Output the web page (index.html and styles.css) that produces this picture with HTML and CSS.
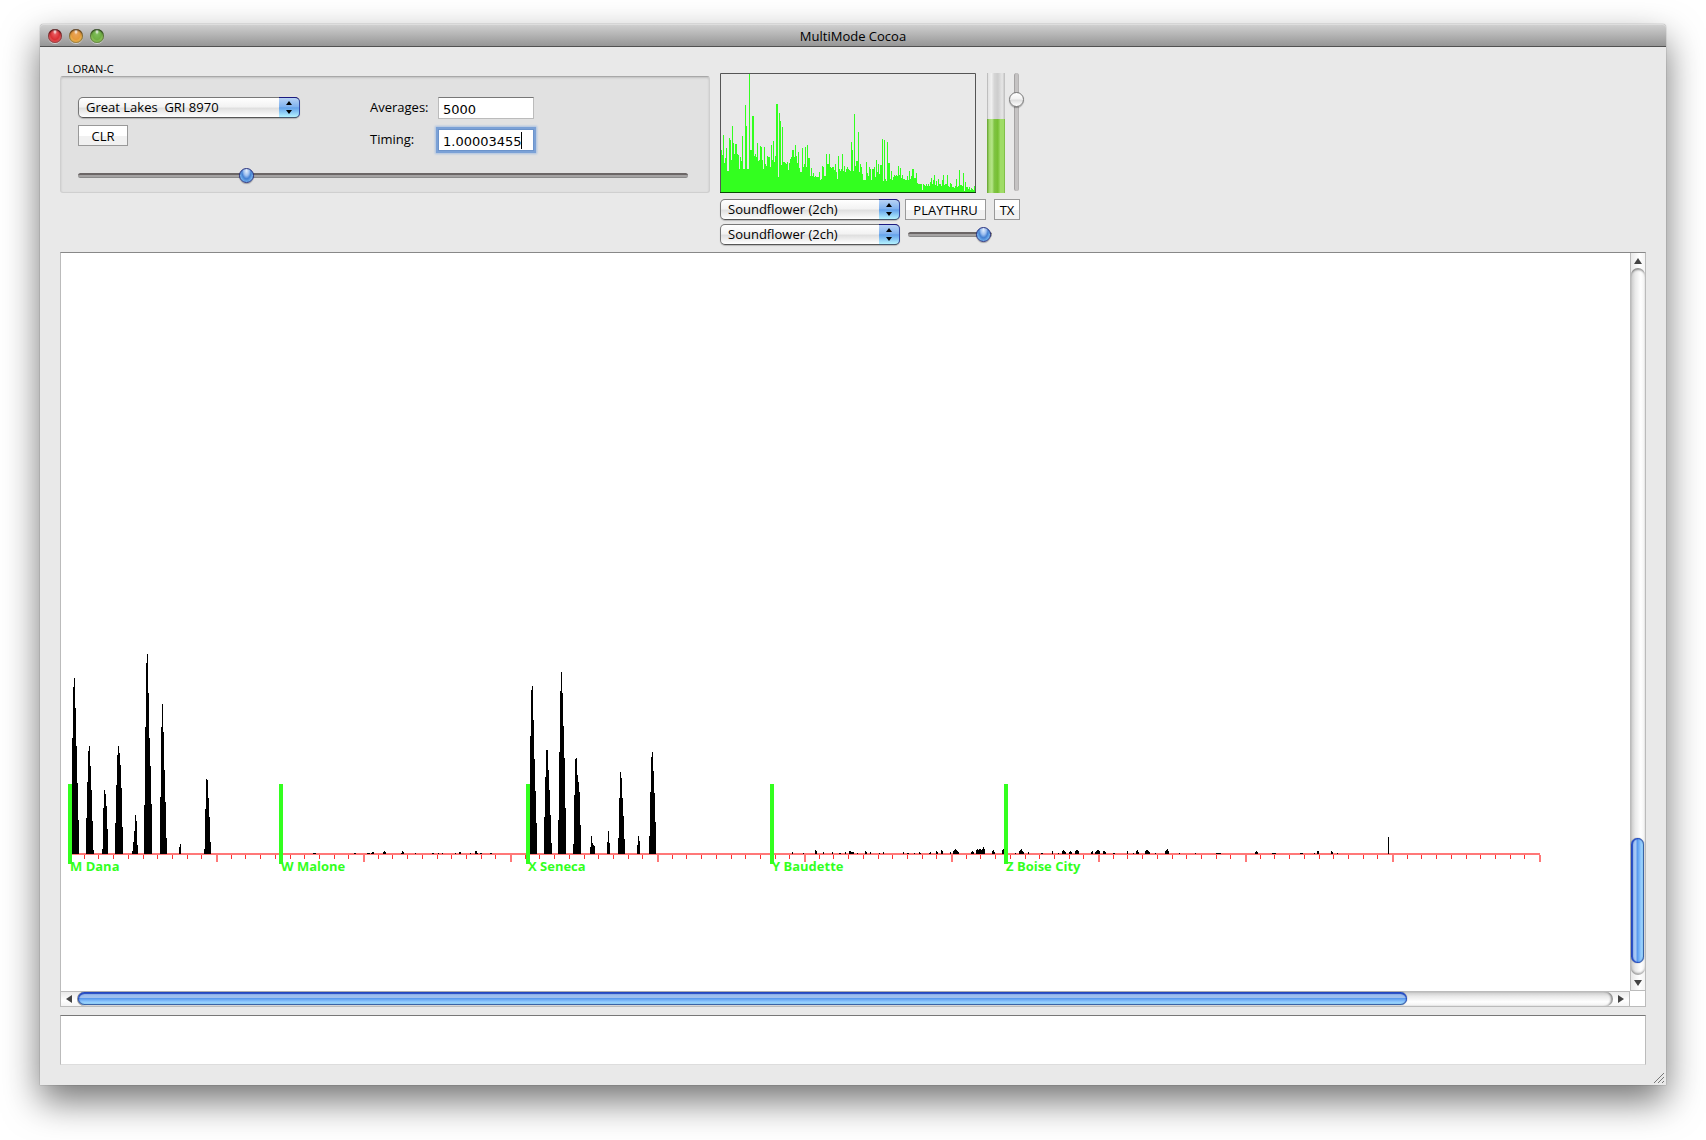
FILE: index.html
```html
<!DOCTYPE html>
<html lang="en">

<head>
    <meta charset="UTF-8">
    <meta name="viewport" content="width=device-width, initial-scale=1.0">
    <title>MultiMode Cocoa</title>
    <link rel="stylesheet" href="styles.css">
</head>

<body>
    <div class="window">
        <header class="titlebar">
            <div class="lights">
                <button class="light red" aria-label="Close"></button>
                <button class="light yellow" aria-label="Minimize"></button>
                <button class="light green" aria-label="Zoom"></button>
            </div>
            <h1>MultiMode Cocoa</h1>
        </header>

        <main class="content">
            <div class="controls">
                <fieldset class="loran">
                    <legend>LORAN-C</legend>
                    <div class="box">
                        <div class="settings">
                            <div class="chain">
                                <div class="popup">
                                    <select id="gri" aria-label="Chain">
                                        <option>Great Lakes&nbsp; GRI 8970</option>
                                    </select>
                                    <span class="cap"><svg width="6" height="13" viewBox="0 0 6 13"><path d="M3 0L6 4H0zM3 13L0 9H6z"/></svg></span>
                                </div>
                                <button class="square clr">CLR</button>
                            </div>
                            <form class="numbers">
                                <label for="averages">Averages:</label>
                                <input id="averages" type="text" value="5000" autocomplete="off">
                                <label for="timing">Timing:</label>
                                <div class="field">
                                    <input id="timing" type="text" value="1.00003455" autocomplete="off">
                                    <span class="caret"></span>
                                </div>
                            </form>
                        </div>
                        <input class="slider" type="range" value="27" aria-label="Offset">
                    </div>
                </fieldset>

                <div class="audio">
                    <div class="levels">
                        <svg class="spectrum" width="256" height="120" viewBox="0 0 256 120">
                            <path id="spectrum" fill="#33ff1f"/>
                            <path d="M.5 120V.5H255.5V120" fill="none" stroke="#555"/>
                            <path d="M0 119.5H256" stroke="#084a04"/>
                        </svg>
                        <div class="meter" role="meter" aria-label="Level" aria-valuenow="62">
                            <div class="fill" style="height: 62%"></div>
                        </div>
                        <input class="slider vertical" type="range" value="82" aria-label="Gain">
                    </div>
                    <div class="device">
                        <div class="popup">
                            <select aria-label="Input device">
                                <option>Soundflower (2ch)</option>
                            </select>
                            <span class="cap"><svg width="6" height="13" viewBox="0 0 6 13"><path d="M3 0L6 4H0zM3 13L0 9H6z"/></svg></span>
                        </div>
                        <button class="square playthru">PLAYTHRU</button>
                        <button class="square tx">TX</button>
                    </div>
                    <div class="device">
                        <div class="popup">
                            <select aria-label="Output device">
                                <option>Soundflower (2ch)</option>
                            </select>
                            <span class="cap"><svg width="6" height="13" viewBox="0 0 6 13"><path d="M3 0L6 4H0zM3 13L0 9H6z"/></svg></span>
                        </div>
                        <input class="slider volume" type="range" value="99" aria-label="Volume">
                    </div>
                </div>
            </div>

            <section class="scroll-view">
                <div class="plot">
                    <svg width="1569" height="738" shape-rendering="crispEdges">
                        <g id="ticks"></g>
                        <path d="M9 600H1479V602H9z" fill="#ff7878"/>
                        <path id="pulses"/>
                        <g id="stations"></g>
                    </svg>
                </div>
                <div class="vbar">
                    <button class="arrow" aria-label="Up"><svg width="8" height="6"><path d="M4 0L8 6H0z"/></svg></button>
                    <div class="track">
                        <div class="knob"></div>
                    </div>
                    <button class="arrow" aria-label="Down"><svg width="8" height="6"><path d="M0 0H8L4 6z"/></svg></button>
                </div>
                <div class="hbar">
                    <button class="arrow" aria-label="Left"><svg width="6" height="8"><path d="M6 0V8L0 4z"/></svg></button>
                    <div class="track">
                        <div class="knob" style="width: 86.6%"></div>
                    </div>
                    <button class="arrow" aria-label="Right"><svg width="6" height="8"><path d="M0 0L6 4L0 8z"/></svg></button>
                </div>
            </section>

            <textarea class="log" aria-label="Log"></textarea>
        </main>

        <svg class="grip" width="12" height="12" viewBox="0 0 12 12"><path d="M1 11L11 1M5 11L11 5M9 11L11 9" stroke="#777" fill="none"/></svg>
    </div>

    <script src="script.js"></script>
</body>

</html>
```
FILE: styles.css
```css
* {
    margin: 0;
    padding: 0;
    box-sizing: border-box;
}

body {
    display: flex;
    min-height: 100vh;
    padding: 24px 40px 55px 40px;
    background: #fff;
    font-family: "Lucida Grande", "Open Sans", "Noto Sans", sans-serif;
    font-size: 13px;
    color: #000;
}

button,
input,
select,
textarea {
    font: inherit;
    color: inherit;
    border: none;
    border-radius: 0;
    outline: none;
}

.window {
    position: relative;
    display: flex;
    flex-direction: column;
    flex: 1;
    min-width: 0;
    background: #e9e9e9;
    border-radius: 4px 4px 0 0;
    box-shadow: 0 0 1px rgba(0, 0, 0, 0.7), 0 16px 36px rgba(0, 0, 0, 0.55);
}

/* title bar */
.titlebar {
    display: flex;
    align-items: center;
    height: 23px;
    padding: 0 8px;
    background: linear-gradient(#cfcfcf, #969696);
    border-top: 1px solid #dedede;
    border-bottom: 1px solid #515151;
    border-radius: 4px 4px 0 0;
}

.titlebar h1 {
    flex: 1;
    text-align: center;
    font-size: 13px;
    font-weight: normal;
    line-height: 20px;
    padding-right: 64px;
}

.lights {
    display: flex;
    gap: 7px;
    width: 64px;
}

.light {
    width: 14px;
    height: 14px;
    border-radius: 50%;
    box-shadow: inset 0 1px 2px rgba(0, 0, 0, 0.6), inset 0 0 1px 1px rgba(0, 0, 0, 0.3), 0 1px 0 rgba(255, 255, 255, 0.5);
}

.light.red {
    background: radial-gradient(ellipse at 50% 18%, #fff 0, #e8555a 20%, #d92f34 50%, #ff9f9f 95%);
}

.light.yellow {
    background: radial-gradient(ellipse at 50% 18%, #fff 0, #e8a355 20%, #e59a3a 50%, #fff080 95%);
}

.light.green {
    background: radial-gradient(ellipse at 50% 18%, #fff 0, #7dbb58 20%, #6fae43 50%, #d2f58e 95%);
}

.content {
    display: flex;
    flex-direction: column;
    flex: 1;
    padding: 15px 20px 20px;
}

/* controls */
.controls {
    display: flex;
    gap: 10px;
    margin-bottom: 7px;
}

.loran {
    width: 650px;
    border: none;
}

.loran legend {
    padding-left: 7px;
    font-size: 11px;
    line-height: 14px;
}

.box {
    height: 117px;
    padding: 20px 21px 0 17px;
    background: #e1e1e1;
    border: 1px solid #cfcfcf;
    border-top-color: #a8a8a8;
    border-radius: 3px;
    box-shadow: inset 0 1px 2px rgba(0, 0, 0, 0.15);
}

.settings {
    display: flex;
    gap: 70px;
    height: 71px;
}

.chain {
    width: 222px;
}

.popup {
    position: relative;
    height: 21px;
}

.popup select {
    appearance: none;
    width: 100%;
    height: 21px;
    padding: 0 24px 2px 7px;
    border: 1px solid #777;
    border-bottom-color: #555;
    border-radius: 5px;
    background: linear-gradient(#fff 0, #f3f3f3 45%, #e0e0e0 55%, #fff 100%);
    box-shadow: 0 1px 1px rgba(0, 0, 0, 0.2);
}

.popup .cap {
    position: absolute;
    top: 0;
    right: 0;
    display: flex;
    align-items: center;
    justify-content: center;
    width: 21px;
    height: 21px;
    border: 1px solid #34499f;
    border-top-color: #1c1a80;
    border-left: none;
    border-bottom-color: #46566e;
    border-radius: 0 5px 5px 0;
    background: linear-gradient(#b8d3f5 0, #82b3ef 45%, #64a2ea 52%, #b5f3ff 100%);
    pointer-events: none;
}

.square {
    height: 21px;
    padding-top: 1px;
    border: 1px solid #999;
    background: linear-gradient(#fff 0, #fff 50%, #f1f1f1 51%, #f1f1f1 100%);
    line-height: 18px;
    text-align: center;
}

.clr {
    width: 50px;
    margin-top: 7px;
}

.numbers {
    display: grid;
    grid-template-columns: 68px 96px;
    align-content: start;
    row-gap: 10px;
}

.numbers label {
    line-height: 20px;
}

.numbers input {
    display: block;
    width: 96px;
    height: 22px;
    padding: 2px 4px 0;
    border: 1px solid #bbb;
    border-top-color: #777;
    background: #fff;
    font-family: "Lucida Grande", "DejaVu Sans", sans-serif;
    caret-color: transparent;
}

.numbers input:focus {
    border-color: #6b93cb;
    box-shadow: 0 0 0 2px #7ba1d6, 0 0 2px 3px #a9c0e0;
}

.field {
    position: relative;
}

/* steady caret, shown only while the field has focus */
.field .caret {
    position: absolute;
    top: 3px;
    left: 83px;
    display: none;
    width: 1px;
    height: 17px;
    background: #000;
}

.field input:focus + .caret {
    display: block;
}

/* sliders */
.slider {
    appearance: none;
    display: block;
    width: 100%;
    height: 15px;
    background: none;
}

.slider::-webkit-slider-runnable-track {
    height: 5px;
    border-top: 2px solid #6b6666;
    border-bottom: 1px solid #8a8a8a;
    border-radius: 3px;
    background: #a5a3a3;
}

.slider::-webkit-slider-thumb {
    appearance: none;
    width: 15px;
    height: 15px;
    margin-top: -7px;
    border: 1px solid #26307f;
    border-radius: 50%;
    background: radial-gradient(ellipse at 50% 15%, #e4effc 0, #9dbfef 30%, #4580d2 50%, #7fc0f5 80%, #c8f6ff 100%);
    box-shadow: 0 1px 1px rgba(0, 0, 0, 0.3);
}

.slider.vertical {
    writing-mode: vertical-lr;
    direction: rtl;
    width: 15px;
    height: 118px;
    margin-left: 4px;
}

.slider.vertical::-webkit-slider-runnable-track {
    width: 5px;
    height: 100%;
    border: none;
    border-left: 1px solid #a5a3a3;
    border-right: 1px solid #b5b3b3;
    background: #c5c3c3;
}

.slider.vertical::-webkit-slider-thumb {
    margin: 0 0 0 -6px;
    border-color: #777;
    background: linear-gradient(#fff 0, #f3f3f3 45%, #dedede 55%, #fff 100%);
}

.slider.volume {
    width: 84px;
    margin: 3px 0 0 3px;
}

/* audio devices */
.audio {
    padding-top: 11px;
}

.levels {
    display: flex;
    height: 120px;
}

.spectrum {
    display: block;
    margin-right: 11px;
}

.meter {
    display: flex;
    flex-direction: column;
    justify-content: flex-end;
    width: 18px;
    background: linear-gradient(90deg, #aaa 0, #e4e4e4 8%, #f0f0f0 25%, #d6d6d6 40%, #cdcdcd 60%, #e6e6e6 85%, #bbb 100%);
}

.meter .fill {
    background: linear-gradient(90deg, #5f9f2a 0, #a2d86c 12%, #b6e68a 28%, #80c444 40%, #76bf32 60%, #9fdc66 75%, #9fdc66 92%, #72b13a 100%);
}

.device {
    display: flex;
    margin-top: 4px;
}

.levels + .device {
    margin-top: 6px;
}

.device .popup {
    width: 180px;
    margin-right: 5px;
}

.playthru {
    width: 81px;
    margin-right: 8px;
}

.tx {
    width: 26px;
}

/* scrolling plot */
.scroll-view {
    display: grid;
    grid-template-columns: minmax(0, 1fr) 15px;
    grid-template-rows: minmax(738px, 1fr) 15px;
    border: 1px solid #bbb;
    border-top-color: #888;
    background: #fff;
    flex: 1;
}

.plot {
    overflow: hidden;
}

.plot svg {
    display: block;
}

.plot text {
    fill: #33ff1f;
    font-size: 13px;
    font-weight: 700;
}

.vbar,
.hbar {
    display: flex;
}

.vbar {
    flex-direction: column;
    border-left: 1px solid #bbb;
    border-bottom: 1px solid #bbb;
    background: linear-gradient(90deg, #e9e9e9, #fff 60%, #f3f3f3);
}

.hbar {
    border-top: 1px solid #bbb;
    border-right: 1px solid #bbb;
    background: linear-gradient(#e9e9e9, #fff 60%, #f3f3f3);
}

.arrow {
    display: flex;
    align-items: center;
    justify-content: center;
    flex: none;
    background: none;
}

.arrow svg {
    fill: #444;
}

.vbar .arrow {
    height: 15px;
}

.hbar .arrow {
    width: 16px;
}

.track {
    display: flex;
    flex: 1;
    border-radius: 7px;
}

.vbar .track {
    flex-direction: column;
    justify-content: flex-end;
    padding: 0 1px 12px 0;
    background: linear-gradient(90deg, #c9c9c9, #e9e9e9 30%, #fff 70%, #f0f0f0);
    box-shadow: inset 0 3px 2px -1px rgba(0, 0, 0, 0.4), inset 0 -3px 2px -1px rgba(0, 0, 0, 0.3);
}

.hbar .track {
    padding: 0 0 1px 1px;
    background: linear-gradient(#c9c9c9, #e9e9e9 30%, #fff 70%, #f0f0f0);
    box-shadow: inset 3px 0 2px -1px rgba(0, 0, 0, 0.4), inset -3px 0 2px -1px rgba(0, 0, 0, 0.4);
}

.knob {
    border-radius: 7px;
}

.vbar .knob {
    height: 125px;
    background: linear-gradient(90deg, #8fb5ec 0, #a9c9f5 35%, #5b9bee 50%, #8fc8fd 75%, #a5e2ff 100%);
    box-shadow: inset 1px 0 1px 1px #2449c0, inset -1px 0 1px #34599a, 0 0 1px #333;
}

.hbar .knob {
    background: linear-gradient(#8fb5ec 0, #a3c3ee 42%, #5b9bee 50%, #8fc8fd 75%, #a5e8ff 100%);
    box-shadow: inset 0 1px 1px 1px #2449c0, inset 0 -1px 1px #34599a, 0 0 1px #333;
}

.log {
    height: 50px;
    margin-top: 8px;
    padding: 4px;
    border: 1px solid #bbb;
    border-top-color: #777;
    border-bottom-color: #ddd;
    background: #fff;
    resize: none;
}

.grip {
    position: absolute;
    right: 1px;
    bottom: 1px;
}
```
FILE: script.js
```js
// audio spectrum, one height per column
const spectrum = [
    60, 43, 38, 58, 30, 35, 45, 22, 22, 55, 53, 33, 67, 50, 39, 49, 49, 39, 38, 24, 36, 32, 57, 24, 24, 88, 67, 24, 24,
    120, 43, 43, 77, 77, 37, 39, 36, 50, 32, 33, 47, 46, 33, 24, 46, 29, 27, 37, 36, 36, 26, 48, 33, 52, 31, 37,
    89, 89, 16, 80, 72, 28, 66, 31, 31, 30, 29, 31, 23, 30, 34, 36, 43, 43, 36, 48, 37, 30, 41, 25, 21, 21,
    45, 26, 29, 46, 26, 48, 35, 35, 17, 25, 17, 20, 16, 17, 16, 16, 16, 21, 13, 14, 27, 26, 17, 17,
    39, 29, 29, 39, 26, 25, 26, 26, 23, 29, 21, 14, 37, 24, 22, 24, 39, 22, 27, 21, 24, 26, 24, 23, 22,
    51, 43, 22, 79, 27, 32, 32, 61, 21, 29, 26, 19, 13, 13, 13, 31, 20, 17, 26, 24, 13, 24, 24, 26, 16,
    33, 21, 29, 19, 28, 28, 54, 12, 53, 14, 12, 51, 30, 30, 14, 22, 13, 16, 18, 17, 18, 17, 27, 18, 25, 15,
    18, 14, 14, 13, 13, 17, 13, 22, 14, 17, 24, 24, 15, 15, 20, 10, 9, 9, 9, 9, 3, 9, 8, 7, 9, 7, 9, 7,
    11, 15, 9, 13, 18, 8, 12, 7, 14, 9, 9, 7, 13, 18, 8, 9, 9, 18, 7, 6, 10, 9, 6, 6, 5, 7, 14, 6, 7,
    23, 8, 8, 7, 20, 2, 11, 6, 6, 4, 6, 3, 5, 4, 3, 7, 7
];

// received pulses: first column, then heights
const pulses = [
    [11, 115, 166, 175, 145, 107, 70, 33],
    [25, 35, 71, 102, 107, 87, 63, 32, 3],
    [41, 4, 45, 63, 59, 47, 24],
    [54, 30, 68, 98, 107, 100, 88, 65, 26],
    [71, 2, 11, 22, 38, 32, 8],
    [83, 48, 126, 190, 199, 160, 115, 87, 49],
    [99, 56, 126, 149, 121, 83, 51, 15],
    [118, 6, 9],
    [143, 4, 44, 74, 73, 55, 36, 11],
    [469, 117, 163, 167, 133, 94, 62, 30],
    [483, 36, 76, 103, 103, 83, 63, 38, 10],
    [497, 33, 101, 162, 181, 160, 127, 95, 45],
    [512, 9, 58, 94, 95, 78, 71, 61, 28],
    [529, 6, 17, 10, 8, 7],
    [546, 11, 22, 10],
    [557, 15, 55, 81, 75, 55, 37, 14],
    [576, 8, 17, 12],
    [588, 17, 61, 96, 101, 82, 60, 31],
    // noise floor
    [252, 0, 0, 0], [293, 0, 0], [306, 0, 0, 0], [310, 0, 1, 1], [322, 1, 2, 1], [340, 0, 2, 1], [354, 0],
    [371, 0, 0], [377, 0], [381, 0], [394, 0], [398, 1, 1], [409, 0], [414, 2, 2, 0], [419, 0, 0], [429, 0, 0],
    [731, 1], [742, 0], [754, 3, 2], [762, 1], [771, 1], [778, 0, 0], [784, 1], [788, 2, 2, 1, 1, 1], [796, 0],
    [804, 2, 1], [809, 1], [818, 0], [822, 1], [842, 1], [846, 0, 0], [853, 0], [858, 1, 0], [868, 0, 1],
    [875, 2, 1], [880, 3, 2], [889, 1], [892, 2, 3, 4, 3, 2, 1], [910, 1, 2, 1], [915, 3, 4, 3, 4, 4, 3, 4, 6, 4], [931, 2, 3, 1],
    [941, 3, 4, 3], [954, 0], [958, 2, 3, 4, 2, 1], [967, 1], [980, 0, 0], [991, 2], [997, 0], [1001, 2, 3, 2, 1], [1008, 1, 2, 1], [1014, 2, 3, 3, 2],
    [1030, 1, 2], [1034, 1, 2, 3, 3, 2], [1042, 2, 2, 1], [1052, 0, 0], [1066, 2], [1072, 0], [1075, 2, 3, 1], [1084, 2, 3, 3, 2, 1],
    [1094, 0], [1104, 2, 3, 4, 2], [1118, 0], [1134, 0], [1155, 0, 0, 0, 0, 0],
    [1194, 1, 2, 1], [1211, 0, 0, 0, 0], [1239, 0, 0, 0], [1253, 0], [1256, 2, 2], [1270, 2, 1], [1276, 0], [1327, 16]
];

const stations = [
    [7, 'M Dana'],
    [218, 'W Malone'],
    [465, 'X Seneca'],
    [709, 'Y Baudette'],
    [943, 'Z Boise City']
];

const baseline = 600;

// one 1px wide bar
function bar(x, bottom, height) {
    return `M${x} ${bottom}v${-height}h1v${height}z`;
}

function drawSpectrum() {
    const d = spectrum.map((h, i) => bar(i, 120, h)).join('');
    document.querySelector('#spectrum').setAttribute('d', d);
}

function drawPulses() {
    let d = '';
    pulses.forEach(([x, ...heights]) => {
        heights.forEach((h, i) => {
            d += bar(x + i, baseline + 1, h + 1);
        });
    });
    document.querySelector('#pulses').setAttribute('d', d);
}

function drawTicks() {
    let html = '';
    for (let i = 1; i <= 100; i++) {
        const x = Math.round(8 + i * 14.7);
        if (i % 10 === 0) {
            html += `<rect x="${x}" y="602" width="2" height="7" fill="#ff7878"/>`;
        } else {
            html += `<rect x="${x}" y="602" width="1" height="4" fill="#ff3030"/>`;
        }
    }
    document.querySelector('#ticks').innerHTML = html;
}

function drawStations() {
    document.querySelector('#stations').innerHTML = stations.map(([x, name]) =>
        `<rect x="${x}" y="531" width="4" height="80" fill="#33ff1f"/><text x="${x + 2}" y="618">${name}</text>`
    ).join('');
}

drawSpectrum();
drawPulses();
drawTicks();
drawStations();

const timing = document.querySelector('#timing');
timing.focus();
timing.setSelectionRange(timing.value.length, timing.value.length);
```
